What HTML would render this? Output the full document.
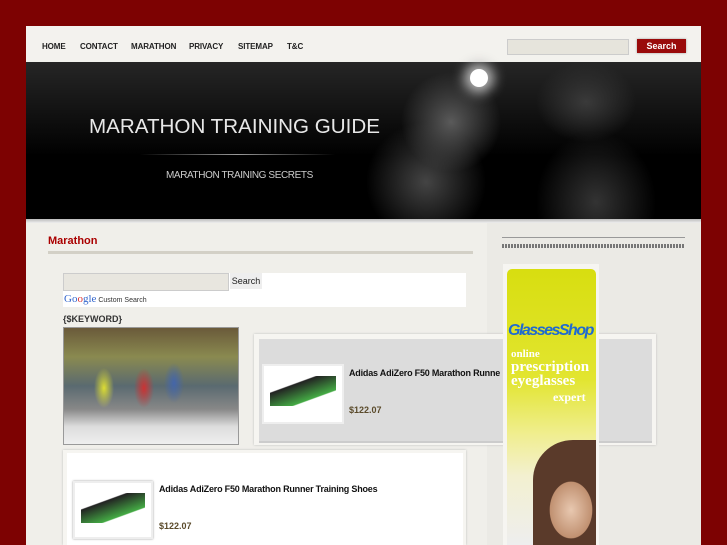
<!DOCTYPE html><html><head><style>
body{margin:0;width:727px;height:545px;overflow:hidden;background:#7d0202;font-family:"Liberation Sans",Arial,sans-serif;position:relative}
.a{position:absolute}
.nav a{position:absolute;top:42px;font-size:8px;font-weight:bold;color:#222;letter-spacing:-.1px}
</style></head><body>
<div class="a" style="left:26px;top:26px;width:675px;height:519px;background:#f0efea"></div>
<div class="a" style="left:26px;top:26px;width:675px;height:36px;background:#f3f2ee"></div>
<div class="nav"><a style="left:42px">HOME</a><a style="left:80px">CONTACT</a><a style="left:131px">MARATHON</a><a style="left:189px">PRIVACY</a><a style="left:238px">SITEMAP</a><a style="left:287px">T&amp;C</a></div>
<div class="a" style="left:507px;top:39px;width:120px;height:14px;background:#e6e4dc;border:1px solid #ccc"></div>
<div class="a" style="left:637px;top:39px;width:49px;height:14px;background:#9a0b0b;color:#fff;font-size:9px;font-weight:bold;text-align:center;line-height:14px;box-shadow:0 0 2px #999">Search</div>
<div class="a" style="left:26px;top:62px;width:675px;height:157px;background:radial-gradient(ellipse 50px 50px at 425px 60px,#5a5a5a,transparent),radial-gradient(ellipse 60px 60px at 400px 120px,#444,transparent),radial-gradient(ellipse 50px 40px at 560px 40px,#3a3a3a,transparent),radial-gradient(ellipse 60px 70px at 570px 140px,#333,transparent),linear-gradient(180deg,#262626,#000 60%)"></div>
<div class="a" style="left:470px;top:69px;width:18px;height:18px;border-radius:50%;background:#fff;box-shadow:0 0 12px 6px #bbb"></div>
<div class="a" style="left:89px;top:115px;font-size:20.6px;color:#e8e8e8">MARATHON TRAINING GUIDE</div>
<div class="a" style="left:140px;top:154px;width:195px;height:1px;background:linear-gradient(90deg,transparent,#999,transparent)"></div>
<div class="a" style="left:166px;top:170px;font-size:10px;color:#ccc;letter-spacing:-.4px">MARATHON TRAINING SECRETS</div>
<div class="a" style="left:26px;top:219px;width:675px;height:4px;background:linear-gradient(#bbb,#eee)"></div>
<div class="a" style="left:487px;top:223px;width:214px;height:322px;background:#ebeae5"></div>
<div class="a" style="left:48px;top:235px;font-size:11px;font-weight:bold;color:#a00">Marathon</div>
<div class="a" style="left:48px;top:251px;width:425px;height:3px;background:#d3d0c6"></div>
<div class="a" style="left:502px;top:237px;width:183px;height:1px;background:#999"></div>
<div class="a" style="left:502px;top:244px;width:183px;height:4px;background:repeating-linear-gradient(90deg,#777 0 2px,transparent 2px 3px)"></div>
<div class="a" style="left:63px;top:273px;width:403px;height:34px;background:#fff"></div>
<div class="a" style="left:63px;top:273px;width:164px;height:16px;background:#e8e6df;border:1px solid #ccc"></div>
<div class="a" style="left:230px;top:273px;width:32px;height:16px;background:#eee;font-size:9px;line-height:16px;text-align:center;color:#222">Search</div>
<div class="a" style="left:64px;top:293px;font-size:11px;font-family:'Liberation Serif',serif;color:#3366cc">Go<span style="color:#d33">o</span>gle<span style="font-size:7px;color:#333;font-family:'Liberation Sans'"> Custom Search</span></div>
<div class="a" style="left:63px;top:314px;font-size:9px;font-weight:bold;color:#333">{$KEYWORD}</div>
<div class="a" style="left:63px;top:327px;width:174px;height:116px;border:1px solid #999;background:radial-gradient(ellipse 10px 20px at 40px 60px,#dd3,transparent),radial-gradient(ellipse 10px 20px at 80px 60px,#c33,transparent),radial-gradient(ellipse 10px 20px at 110px 55px,#46a,transparent),linear-gradient(180deg,#6a5a3a 0,#8a8a50 25%,#5a6a70 50%,#888 70%,#ddd 85%,#eee)"></div>
<div class="a" style="left:254px;top:334px;width:402px;height:111px;background:#f6f5f1;box-shadow:0 0 2px #bbb"></div>
<div class="a" style="left:259px;top:339px;width:393px;height:102px;background:#dcdcdc;border-bottom:2px solid #ccc"></div>
<div class="a" style="left:262px;top:364px;width:78px;height:56px;background:#fff;border:2px solid #eee"><div style="margin:10px 6px;height:30px;background:linear-gradient(160deg,transparent 30%,#222 32%,#4a4 70%,transparent 72%)"></div></div>
<div class="a" style="left:349px;top:368px;font-size:9px;font-weight:bold;color:#111;letter-spacing:-.2px">Adidas AdiZero F50 Marathon Runne</div>
<div class="a" style="left:349px;top:405px;font-size:9px;font-weight:bold;color:#5a4a2a">$122.07</div>
<div class="a" style="left:63px;top:450px;width:403px;height:95px;background:#f6f5f1;box-shadow:0 0 2px #bbb"></div>
<div class="a" style="left:67px;top:453px;width:396px;height:92px;background:#fff"></div>
<div class="a" style="left:73px;top:481px;width:76px;height:54px;background:#fff;border:2px solid #eee;box-shadow:0 0 2px #999"><div style="margin:10px 6px;height:30px;background:linear-gradient(160deg,transparent 30%,#222 32%,#4a4 70%,transparent 72%)"></div></div>
<div class="a" style="left:159px;top:484px;font-size:9px;font-weight:bold;color:#111;letter-spacing:-.2px">Adidas AdiZero F50 Marathon Runner Training Shoes</div>
<div class="a" style="left:159px;top:521px;font-size:9px;font-weight:bold;color:#5a4a2a">$122.07</div>
<div class="a" style="left:503px;top:264px;width:96px;height:281px;background:#f6f5f1"></div>
<div class="a" style="left:507px;top:269px;width:89px;height:276px;border-radius:5px 5px 0 0;background:linear-gradient(180deg,#d8de10 0,#e2e530 40%,#f0ee90 60%,#f3f0d0 75%,#eee)"></div>
<div class="a" style="left:508px;top:322px;font-size:16px;font-style:italic;font-weight:bold;color:#1f6ad0;letter-spacing:-1.5px">GlassesShop</div>
<div class="a" style="left:511px;top:348px;font-family:'Liberation Serif',serif;font-weight:bold;color:#fff;font-size:11px;line-height:13px">online<br><span style="font-size:15px">prescription<br>eyeglasses</span></div>
<div class="a" style="left:553px;top:390px;font-family:'Liberation Serif',serif;font-weight:bold;color:#fff;font-size:12px">expert</div>
<div class="a" style="left:533px;top:440px;width:63px;height:105px;border-radius:40px 0 0 0;background:radial-gradient(ellipse 30px 40px at 38px 70px,#e8c8b0,#c09070 70%,#5a3a2a 72%)"></div>
</body></html>
